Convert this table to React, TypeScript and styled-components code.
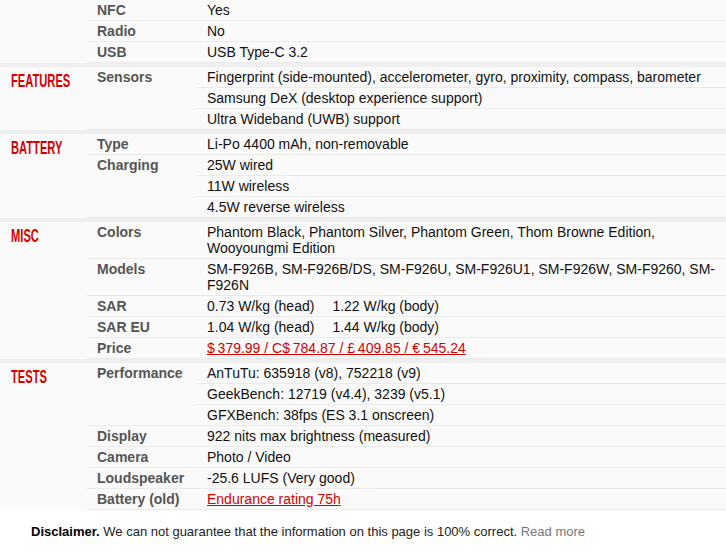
import React from "react";
import styled, { createGlobalStyle } from "styled-components";

type Spec = {
  label?: string;
  values: React.ReactNode[];
};

type Section = {
  title: string;
  specs: Spec[];
};

const GlobalStyle = createGlobalStyle`
  html, body {
    margin: 0;
    padding: 0;
    background: #fff;
  }
  body {
    font-family: "Liberation Sans", Arial, sans-serif;
    font-size: 14px;
    color: #000;
  }
`;

const Page = styled.div`
  width: 726px;
  height: 554px;
  overflow: hidden;
`;

const SpecTable = styled.div`
  display: flex;
  background: #fafafa;
  border-bottom: 4px solid #eeeeee;

  &:last-of-type {
    border-bottom: none;
  }
`;

const Category = styled.div`
  width: 87px;
  flex-shrink: 0;
  padding: 4px 0 0 11px;
  box-sizing: border-box;
  overflow: visible;
`;

const CategoryText = styled.span`
  display: inline-block;
  color: #d50000;
  font-size: 18px;
  font-weight: bold;
  line-height: 20px;
  text-transform: uppercase;
  transform: scaleX(0.62);
  transform-origin: left center;
  white-space: nowrap;
`;

const Specs = styled.div`
  flex: 1;
  display: flex;
  flex-direction: column;
`;

const SpecGroup = styled.div`
  display: flex;
`;

const Label = styled.div`
  width: 110px;
  flex-shrink: 0;
  box-sizing: border-box;
  padding: 2px 10px;
  line-height: 16px;
  font-weight: bold;
  color: #555;
  border-bottom: 1px solid #ebebeb;
  white-space: nowrap;
`;

const Values = styled.div`
  flex: 1;
  display: flex;
  flex-direction: column;
`;

const Value = styled.div`
  padding: 2px 10px;
  line-height: 16px;
  color: #111;
  border-bottom: 1px solid #ebebeb;
`;

const Spacer = styled.span`
  display: inline-block;
  width: 18px;
`;

const RedLink = styled.a`
  color: #d50000;
  text-decoration: underline;
`;

const Disclaimer = styled.p`
  margin: 0;
  padding: 14px 31px;
  font-size: 13px;
  line-height: 16px;
  color: #222;

  strong {
    color: #000;
  }
`;

const MoreLink = styled.a`
  color: #777;
  text-decoration: none;
`;

const SarValue: React.FC<{ head: string; body: string }> = ({ head, body }) => (
  <>
    {head} W/kg (head)
    <Spacer />
    {body} W/kg (body)
  </>
);

const sections: Section[] = [
  {
    title: "",
    specs: [
      { label: "NFC", values: ["Yes"] },
      { label: "Radio", values: ["No"] },
      { label: "USB", values: ["USB Type-C 3.2"] },
    ],
  },
  {
    title: "Features",
    specs: [
      {
        label: "Sensors",
        values: [
          "Fingerprint (side-mounted), accelerometer, gyro, proximity, compass, barometer",
          "Samsung DeX (desktop experience support)",
          "Ultra Wideband (UWB) support",
        ],
      },
    ],
  },
  {
    title: "Battery",
    specs: [
      { label: "Type", values: ["Li-Po 4400 mAh, non-removable"] },
      {
        label: "Charging",
        values: ["25W wired", "11W wireless", "4.5W reverse wireless"],
      },
    ],
  },
  {
    title: "Misc",
    specs: [
      {
        label: "Colors",
        values: [
          "Phantom Black, Phantom Silver, Phantom Green, Thom Browne Edition, Wooyoungmi Edition",
        ],
      },
      {
        label: "Models",
        values: [
          "SM-F926B, SM-F926B/DS, SM-F926U, SM-F926U1, SM-F926W, SM-F9260, SM-F926N",
        ],
      },
      { label: "SAR", values: [<SarValue head="0.73" body="1.22" />] },
      { label: "SAR EU", values: [<SarValue head="1.04" body="1.44" />] },
      {
        label: "Price",
        values: [
          <RedLink href="#">
            $&thinsp;379.99 / C$&thinsp;784.87 / £&thinsp;409.85 / €&thinsp;545.24
          </RedLink>,
        ],
      },
    ],
  },
  {
    title: "Tests",
    specs: [
      {
        label: "Performance",
        values: [
          "AnTuTu: 635918 (v8), 752218 (v9)",
          "GeekBench: 12719 (v4.4), 3239 (v5.1)",
          "GFXBench: 38fps (ES 3.1 onscreen)",
        ],
      },
      { label: "Display", values: ["922 nits max brightness (measured)"] },
      { label: "Camera", values: ["Photo / Video"] },
      { label: "Loudspeaker", values: ["-25.6 LUFS (Very good)"] },
      {
        label: "Battery (old)",
        values: [<RedLink href="#">Endurance rating 75h</RedLink>],
      },
    ],
  },
];

const App: React.FC = () => {
  return (
    <>
      <GlobalStyle />
      <Page>
        {sections.map((section, i) => (
          <SpecTable key={i}>
            <Category>
              {section.title && <CategoryText>{section.title}</CategoryText>}
            </Category>
            <Specs>
              {section.specs.map((spec, j) => (
                <SpecGroup key={j}>
                  <Label>{spec.label}</Label>
                  <Values>
                    {spec.values.map((value, k) => (
                      <Value key={k}>{value}</Value>
                    ))}
                  </Values>
                </SpecGroup>
              ))}
            </Specs>
          </SpecTable>
        ))}
        <Disclaimer>
          <strong>Disclaimer.</strong> We can not guarantee that the information
          on this page is 100% correct. <MoreLink href="#">Read more</MoreLink>
        </Disclaimer>
      </Page>
    </>
  );
};

export default App;
